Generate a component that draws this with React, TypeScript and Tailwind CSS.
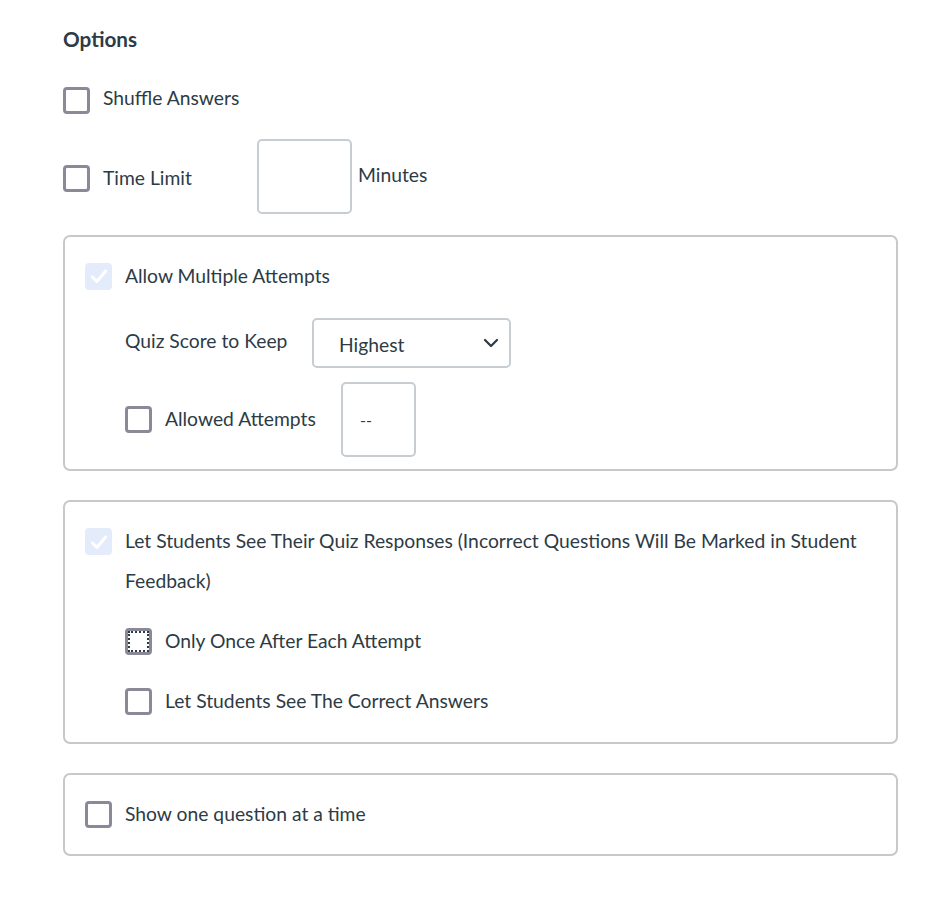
import React from 'react';

const Box: React.FC<{ checked?: boolean; dotted?: boolean; className?: string }> = ({ checked, dotted, className = '' }) => {
  if (checked) {
    return (
      <div className={`w-[27px] h-[27px] shrink-0 rounded-[4px] bg-[#e4ecfb] flex items-center justify-center ${className}`}>
        <svg width="20" height="20" viewBox="0 0 24 24" fill="none" stroke="#ffffff" strokeWidth="3.6" strokeLinecap="round" strokeLinejoin="round">
          <polyline points="4 13 9.5 18.5 20 6" />
        </svg>
      </div>
    );
  }
  return (
    <div className={`w-[27px] h-[27px] shrink-0 rounded-[4px] border-[3px] border-[#8b8997] bg-white ${className}`}>
      {dotted && <div className="w-full h-full border-2 border-dotted border-[#2d3b45]"></div>}
    </div>
  );
};

const Row: React.FC<{ label: string; checked?: boolean; dotted?: boolean }> = ({ label, checked, dotted }) => (
  <div className="flex items-center gap-[13px] h-[40px]">
    <Box checked={checked} dotted={dotted} />
    <span>{label}</span>
  </div>
);

const App: React.FC = () => {
  return (
    <div className="min-h-[901px] bg-white text-[#2d3b45] text-[19.3px] font-['Lato','Open_Sans',sans-serif]">
      <div className="pl-[63px] pt-[25px] w-[898px] flex flex-col">
        <h2 className="font-bold text-[20.7px] leading-[28px]">Options</h2>

        <div className="mt-[33px] flex items-center gap-[13px] h-[28px]">
          <Box />
          <span className="-mt-[3px]">Shuffle Answers</span>
        </div>

        <div className="mt-[25px] flex items-center h-[75px]">
          <div className="w-[194px] flex items-center gap-[13px] pt-[4px]">
            <Box />
            <span>Time Limit</span>
          </div>
          <div className="w-[95px] h-[75px] rounded-[5px] border-2 border-[#c7cdd1]"></div>
          <span className="ml-[6px] -mt-[3px]">Minutes</span>
        </div>

        <div className="mt-[21px] border-2 border-[#c8c8c8] rounded-[7px] px-[20px] pt-[19px] pb-[12px]">
          <Row label="Allow Multiple Attempts" checked />
          <div className="mt-[22px] pl-[40px] flex items-center h-[50px]">
            <span className="w-[187px] -mt-[4px]">Quiz Score to Keep</span>
            <div className="w-[199px] h-[50px] rounded-[5px] border-2 border-[#c7cdd1] flex items-center justify-between pl-[25px] pr-[9px]">
              <span className="pt-[4px]">Highest</span>
              <svg width="18" height="18" viewBox="0 0 24 24" fill="none" stroke="#2d3b45" strokeWidth="3" strokeLinecap="round" strokeLinejoin="round">
                <polyline points="4 8 12 16 20 8" />
              </svg>
            </div>
          </div>
          <div className="mt-[14px] pl-[40px] flex items-center h-[75px]">
            <div className="w-[216px] flex items-center gap-[13px]">
              <Box />
              <span>Allowed Attempts</span>
            </div>
            <div className="w-[75px] h-[75px] rounded-[5px] border-2 border-[#c7cdd1] flex items-center pl-[17px] text-[16px]">--</div>
          </div>
        </div>

        <div className="mt-[29px] border-2 border-[#c8c8c8] rounded-[7px] px-[20px] pt-[19px] pb-[21px]">
          <div className="flex items-start gap-[13px]">
            <Box checked className="mt-[7px]" />
            <span className="leading-[40px]">Let Students See Their Quiz Responses (Incorrect Questions Will Be Marked in Student Feedback)</span>
          </div>
          <div className="pl-[40px] mt-[20px] flex flex-col gap-[20px]">
            <Row label="Only Once After Each Attempt" dotted />
            <Row label="Let Students See The Correct Answers" />
          </div>
        </div>

        <div className="mt-[29px] border-2 border-[#c8c8c8] rounded-[7px] px-[20px] pt-[19px] pb-[20px]">
          <Row label="Show one question at a time" />
        </div>
      </div>
    </div>
  );
};

export default App;
